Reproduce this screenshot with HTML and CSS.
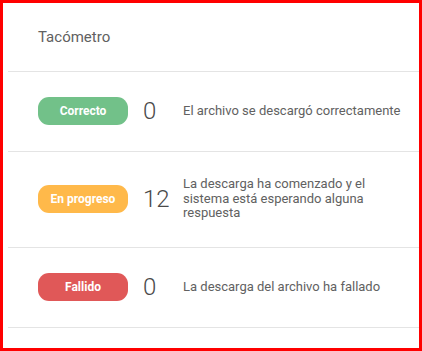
FILE: index.html
```html
<!DOCTYPE html>
<html lang="es">

<head>
    <meta charset="UTF-8">
    <meta name="viewport" content="width=device-width, initial-scale=1.0">
    <title>Tacómetro</title>
    <link rel="stylesheet" href="styles.css">
</head>

<body>

    <div class="frame">
        <div class="card">
            <div class="card-header">Tacómetro</div>

            <div class="status-row">
                <span class="pill pill-ok">Correcto</span>
                <span class="count">0</span>
                <p class="desc">El archivo se descargó correctamente</p>
            </div>

            <div class="status-row">
                <span class="pill pill-progress">En progreso</span>
                <span class="count">12</span>
                <p class="desc">La descarga ha comenzado y el sistema está esperando alguna respuesta</p>
            </div>

            <div class="status-row">
                <span class="pill pill-fail">Fallido</span>
                <span class="count">0</span>
                <p class="desc">La descarga del archivo ha fallado</p>
            </div>
        </div>
    </div>

</body>

</html>
```

FILE: styles.css
```css
body {
    margin: 0;
    padding: 0;
    background-color: #fff;
    font-family: Roboto, "Liberation Sans", Arial, sans-serif;
}

.frame {
    box-sizing: border-box;
    width: 422px;
    height: 351px;
    border: 3px solid #ff0000;
    overflow: hidden;
}

.card {
    margin-left: 5px;
}

.card-header {
    height: 68px;
    padding-left: 30px;
    display: flex;
    align-items: center;
    font-size: 15px;
    color: #616161;
    border-bottom: 1px solid #e4e4e4;
}

.status-row {
    display: flex;
    align-items: center;
    padding: 25px 0 26px 30px;
    min-height: 28px;
    border-bottom: 1px solid #e4e4e4;
}

.pill {
    width: 90px;
    height: 28px;
    border-radius: 11px;
    display: flex;
    align-items: center;
    justify-content: center;
    color: #fff;
    font-size: 12px;
    font-weight: bold;
    flex-shrink: 0;
}

.pill-ok {
    background-color: #72c189;
}

.pill-progress {
    background-color: #ffb94a;
}

.pill-fail {
    background-color: #e05858;
}

.count {
    width: 40px;
    margin-left: 15px;
    font-size: 24px;
    font-weight: 300;
    color: #4a4a4a;
    flex-shrink: 0;
}

.desc {
    margin: 0;
    width: 222px;
    font-size: 13px;
    line-height: 14.7px;
    color: #616161;
}
```
